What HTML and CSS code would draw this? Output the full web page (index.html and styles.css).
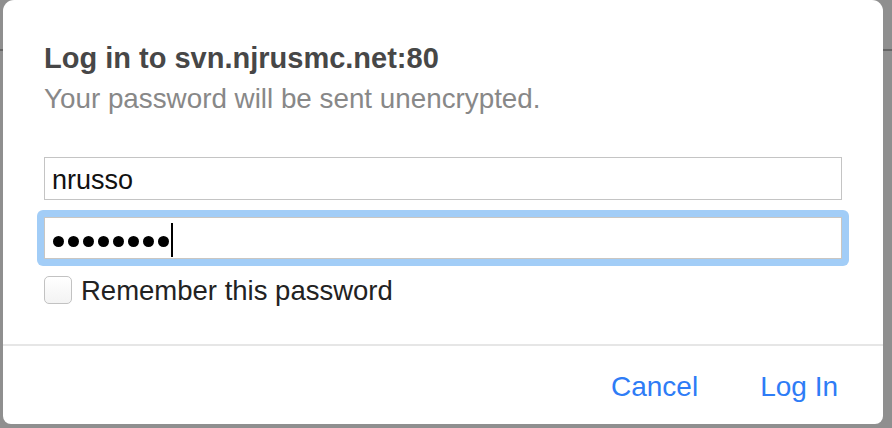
FILE: index.html
```html
<!DOCTYPE html>
<html lang="en">
<head>
<meta charset="utf-8">
<title>Log in</title>
<link rel="stylesheet" href="styles.css">
</head>
<body>
<div class="dialog">
  <div class="content">
    <div class="title">Log in to svn.njrusmc.net:80</div>
    <div class="subtitle">Your password will be sent unencrypted.</div>
    <div class="field">nrusso</div>
    <div class="ring">
      <div class="field field-pass">
        <span class="dot"></span><span class="dot"></span><span class="dot"></span><span class="dot"></span><span class="dot"></span><span class="dot"></span><span class="dot"></span><span class="dot"></span><span class="caret"></span>
      </div>
    </div>
    <label class="remember">
      <span class="checkbox"></span>
      <span class="remember-text">Remember this password</span>
    </label>
  </div>
  <div class="footer">
    <span class="btn">Cancel</span>
    <span class="btn">Log In</span>
  </div>
</div>
</body>
</html>
```
FILE: styles.css
```css
html, body {
  margin: 0;
  padding: 0;
}
body {
  width: 892px;
  height: 428px;
  overflow: hidden;
  background: linear-gradient(to bottom, #8f8f8f 0, #8f8f8f 49px, #666 49px, #666 51px, #8f8f8f 51px);
  font-family: "Liberation Sans", Arial, sans-serif;
}
.dialog {
  margin-left: 3px;
  width: 880px;
  height: 424px;
  background: #fff;
  border-radius: 11px 11px 8px 8px;
  display: flex;
  flex-direction: column;
}
.content {
  padding: 41px 41px 40px 41px;
  display: flex;
  flex-direction: column;
}
.title {
  font-weight: bold;
  font-size: 29px;
  line-height: 34px;
  color: #474747;
}
.subtitle {
  margin-top: 8px;
  font-size: 27.8px;
  line-height: 32px;
  color: #888;
}
.field {
  box-sizing: border-box;
  margin-top: 42px;
  width: 798px;
  height: 43px;
  border: 1px solid #c4c4c4;
  padding: 3px 0 0 7px;
  font-size: 27px;
  line-height: 38px;
  color: #111;
  background: #fff;
}
.ring {
  margin: 10px 0 0 -7px;
  width: 798px;
  padding: 7px;
  background: #a2cdf7;
  border-radius: 6px;
}
.field-pass {
  margin-top: 0;
  height: 42px;
  padding: 0 0 0 8px;
  display: flex;
  align-items: center;
  gap: 4px;
  border-color: #c9c6c2;
}
.dot {
  width: 11px;
  height: 11px;
  border-radius: 50%;
  background: #000;
  margin-top: 7px;
}
.caret {
  width: 2px;
  height: 34px;
  background: #000;
  margin-left: -2px;
  margin-top: 4px;
}
.remember {
  margin-top: 10px;
  display: flex;
  align-items: center;
  gap: 9px;
  height: 28px;
}
.checkbox {
  box-sizing: border-box;
  width: 28px;
  height: 28px;
  border: 1px solid #c2c2c2;
  border-radius: 5px;
  background: linear-gradient(#fff, #f3f3f3);
}
.remember-text {
  font-size: 27.5px;
  line-height: 32px;
  color: #222;
  margin-top: 2px;
}
.footer {
  flex: 1;
  border-top: 2px solid #e6e6e6;
  display: flex;
  justify-content: flex-end;
  align-items: flex-start;
  gap: 62px;
  padding: 24px 45px 0 0;
}
.btn {
  font-size: 28px;
  line-height: 34px;
  color: #2e7cf6;
}
```
